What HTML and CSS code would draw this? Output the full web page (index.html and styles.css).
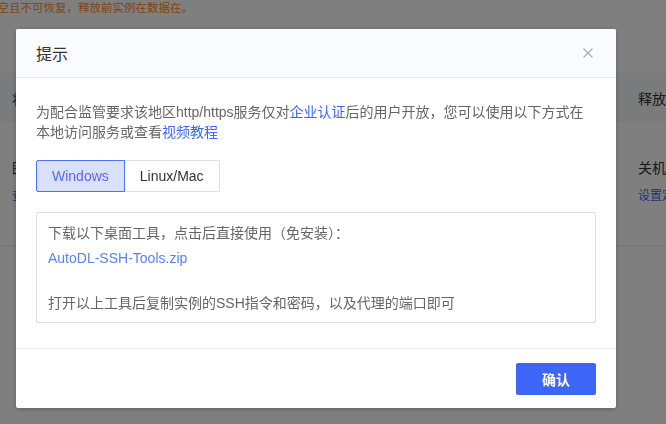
FILE: index.html
```html
<!DOCTYPE html>
<html lang="zh-CN">
<head>
    <meta charset="UTF-8">
    <meta name="viewport" content="width=device-width, initial-scale=1.0">
    <title>提示</title>
    <link rel="stylesheet" href="styles.css">
</head>
<body>
    <div class="page">
        <div class="notice">需空且不可恢复，释放前实例在数据在。</div>
        <div class="table">
            <div class="row head">
                <div class="cell">状态</div>
                <div class="cell right">释放时间</div>
            </div>
            <div class="row">
                <div class="cell">
                    <div class="dark">图</div>
                    <div class="link">查看</div>
                </div>
                <div class="cell right">
                    <div class="dark">关机后释放</div>
                    <div class="link">设置定时</div>
                </div>
            </div>
        </div>
    </div>

    <div class="mask">
        <div class="dialog">
            <div class="dialog-header">
                <span class="dialog-title">提示</span>
                <svg class="close" width="10" height="10" viewBox="0 0 10 10">
                    <path d="M0.5 0.5L9.5 9.5M9.5 0.5L0.5 9.5" stroke="#a8abb2" stroke-width="1.2" fill="none"/>
                </svg>
            </div>
            <div class="dialog-body">
                <p class="intro">为配合监管要求该地区http/https服务仅对<a class="blue">企业认证</a>后的用户开放，您可以使用以下方式在本地访问服务或查看<a class="blue">视频教程</a></p>
                <div class="tabs">
                    <span class="tab active">Windows</span>
                    <span class="tab">Linux/Mac</span>
                </div>
                <div class="panel">
                    <p>下载以下桌面工具，点击后直接使用（免安装）：</p>
                    <p><a class="file">AutoDL-SSH-Tools.zip</a></p>
                    <p class="gap"></p>
                    <p>打开以上工具后复制实例的SSH指令和密码，以及代理的端口即可</p>
                </div>
            </div>
            <div class="dialog-footer">
                <button class="btn-primary">确认</button>
            </div>
        </div>
    </div>
</body>
</html>
```

FILE: styles.css
```css
body {
    margin: 0;
    width: 666px;
    height: 424px;
    overflow: hidden;
    font-family: "Liberation Sans", "Noto Sans CJK SC", sans-serif;
    background: #fff;
    color: #333;
}
.page {
    height: 424px;
}
.notice {
    font-size: 11.5px;
    line-height: 16px;
    color: #ff8a14;
    margin-left: -14px;
}
.table {
    margin-top: 57px;
}
.row {
    display: flex;
    justify-content: space-between;
    height: 123px;
    border-bottom: 1px solid #ebeef5;
    font-size: 14px;
}
.row.head {
    height: 49px;
    background: #f5f6f8;
    border-bottom: none;
    align-items: center;
}
.cell {
    padding-left: 12px;
}
.cell.right {
    width: 28px;
    overflow: hidden;
    white-space: nowrap;
    padding-left: 0;
}
.row .dark {
    margin-top: 36px;
    line-height: 20px;
}
.row .link {
    margin-top: 8px;
    font-size: 12px;
    color: #3d66f6;
}
.mask {
    position: fixed;
    inset: 0;
    background: rgba(0, 0, 0, 0.5);
    padding: 29px 0 0 16px;
}
.dialog {
    width: 600px;
    background: #fff;
    border-radius: 2px;
    box-shadow: 0 1px 4px rgba(0, 0, 0, 0.25);
    overflow: hidden;
}
.dialog-header {
    display: flex;
    justify-content: space-between;
    align-items: center;
    height: 48px;
    padding: 0 23px 0 20px;
    background: #fafbfe;
    border-bottom: 1px solid #e6e8ee;
}
.dialog-title {
    font-size: 16px;
    color: #333;
}
.dialog-body {
    padding: 24px 20px 25px;
    font-size: 14px;
    color: #666;
}
.intro {
    margin: 0;
    line-height: 20px;
}
.blue {
    color: #3d66f6;
}
.tabs {
    display: flex;
    margin-top: 18px;
}
.tab {
    height: 30px;
    line-height: 30px;
    padding: 0 15px;
    border: 1px solid #dcdfe6;
    color: #333;
}
.tab:first-child {
    border-radius: 2px 0 0 2px;
}
.tab:last-child {
    border-left: none;
    border-radius: 0 2px 2px 0;
}
.tab.active {
    background: #d9e0fb;
    border-color: #4a72f5;
    color: #5a6ae6;
}
.panel {
    margin-top: 20px;
    padding: 8px 11px 6px;
    border: 1px solid #dcdfe6;
    border-radius: 2px;
}
.panel p {
    margin: 0;
    line-height: 25px;
}
.panel p.gap {
    height: 20px;
}
.file {
    color: #5584f6;
}
.dialog-footer {
    display: flex;
    justify-content: flex-end;
    padding: 14px 20px 13px;
    border-top: 1px solid #e6e8ee;
}
.btn-primary {
    width: 80px;
    height: 32px;
    border: none;
    border-radius: 2px;
    background: #3d66f6;
    color: #fff;
    font-family: inherit;
    font-size: 14px;
    font-weight: bold;
}
```
